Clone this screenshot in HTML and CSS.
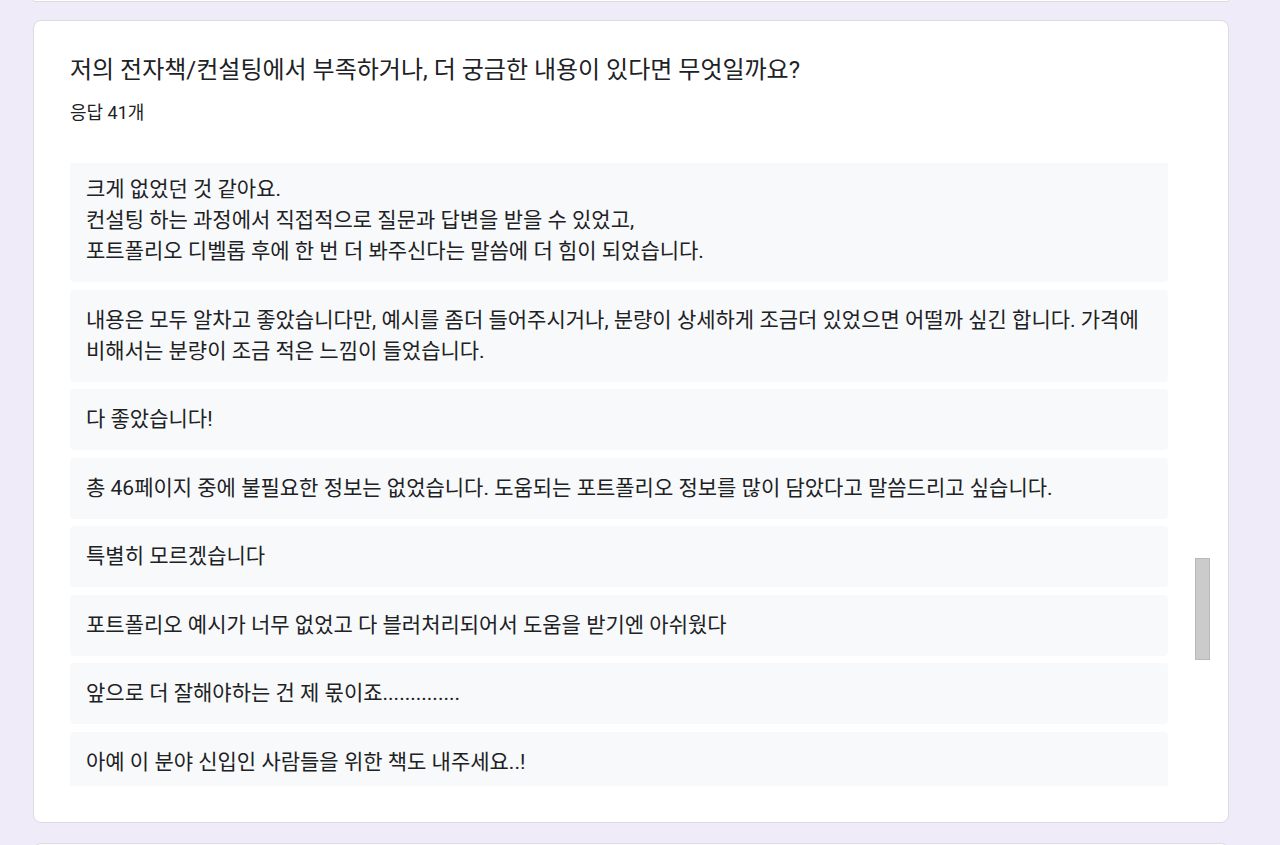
FILE: index.html
```html
<!DOCTYPE html>
<html lang="ko">
<head>
<meta charset="utf-8">
<title>응답 요약</title>
<link rel="stylesheet" href="styles.css">
</head>
<body>
<div class="page">
  <div class="card card-prev"></div>
  <section class="card card-main">
    <h2 class="question">저의 전자책/컨설팅에서 부족하거나, 더 궁금한 내용이 있다면 무엇일까요?</h2>
    <div class="count">응답 41개</div>
    <div class="list-wrap">
      <ul class="list">
        <li class="item first">크게 없었던 것 같아요.<br>컨설팅 하는 과정에서 직접적으로 질문과 답변을 받을 수 있었고,<br>포트폴리오 디벨롭 후에 한 번 더 봐주신다는 말씀에 더 힘이 되었습니다.</li>
        <li class="item">내용은 모두 알차고 좋았습니다만, 예시를 좀더 들어주시거나, 분량이 상세하게 조금더 있었으면 어떨까 싶긴 합니다. 가격에 비해서는 분량이 조금 적은 느낌이 들었습니다.</li>
        <li class="item">다 좋았습니다!</li>
        <li class="item">총 46페이지 중에 불필요한 정보는 없었습니다. 도움되는 포트폴리오 정보를 많이 담았다고 말씀드리고 싶습니다.</li>
        <li class="item">특별히 모르겠습니다</li>
        <li class="item">포트폴리오 예시가 너무 없었고 다 블러처리되어서 도움을 받기엔 아쉬웠다</li>
        <li class="item">앞으로 더 잘해야하는 건 제 몫이죠..............</li>
        <li class="item">아예 이 분야 신입인 사람들을 위한 책도 내주세요..!</li>
      </ul>
      <div class="scrollbar"><div class="thumb"></div></div>
    </div>
  </section>
  <div class="card card-next"></div>
</div>
</body>
</html>
```

FILE: styles.css
```css
* { box-sizing: border-box; }
html, body {
  margin: 0;
  padding: 0;
  background: #f0ebf8;
  height: 845px;
  overflow: hidden;
}
body {
  font-family: Roboto, "Noto Sans CJK KR", "Noto Sans", sans-serif;
  color: #202124;
}
.page {
  width: 1196px;
  margin: 0 0 0 33px;
  display: flex;
  flex-direction: column;
  gap: 18px;
}
.card {
  background: #fff;
  border: 1px solid #dadce0;
  border-radius: 8px;
}
.card-prev {
  height: 2px;
  border-top: none;
  border-radius: 0 0 8px 8px;
}
.card-next {
  height: 30px;
  border-bottom: none;
  border-radius: 8px 8px 0 0;
  margin-top: 2px;
}
.card-main {
  padding: 24px 18px 36px 36px;
}
.question {
  margin: 0;
  font-size: 24px;
  font-weight: 400;
  line-height: 50px;
  letter-spacing: 0;
}
.count {
  font-size: 18px;
  line-height: 24px;
  margin-top: 6px;
}
.list-wrap {
  position: relative;
  margin-top: 38px;
  height: 623px;
  overflow: hidden;
  padding-right: 42px;
}
.list {
  list-style: none;
  margin: 0;
  padding: 0;
  display: flex;
  flex-direction: column;
  gap: 7.5px;
}
.item {
  background: #f8f9fa;
  border-radius: 4px;
  padding: 15px 16px;
  font-size: 21px;
  line-height: 31px;
}
.item.first {
  margin-top: -4px;
}
.scrollbar {
  position: absolute;
  top: 0;
  right: 0;
  width: 15px;
  height: 100%;
}
.thumb {
  position: absolute;
  top: 395px;
  left: 0;
  width: 15px;
  height: 102px;
  background: #cbcbcb;
  border: 1px solid #b9b9b9;
}
```
